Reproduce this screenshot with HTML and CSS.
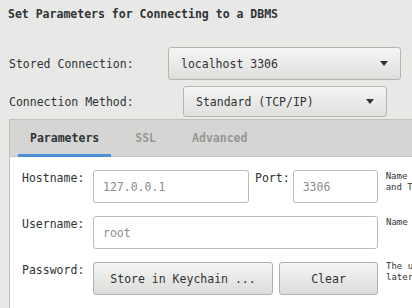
FILE: index.html
```html
<!DOCTYPE html>
<html lang="en">
<head>
    <meta charset="UTF-8">
    <title>Connect to Database</title>
    <link rel="stylesheet" href="styles.css">
</head>
<body>

    <h2 class="title">Set Parameters for Connecting to a DBMS</h2>

    <div class="conn-row">
        <label class="conn-label">Stored Connection:</label>
        <div class="dropdown dropdown-stored">
            <span>localhost 3306</span>
            <span class="arrow"></span>
        </div>
    </div>

    <div class="conn-row conn-row-method">
        <label class="conn-label">Connection Method:</label>
        <div class="dropdown dropdown-method">
            <span>Standard (TCP/IP)</span>
            <span class="arrow"></span>
        </div>
    </div>

    <div class="panel">
        <div class="tabs">
            <div class="tab active">Parameters</div>
            <div class="tab">SSL</div>
            <div class="tab">Advanced</div>
        </div>

        <div class="panel-body">
            <div class="field-row">
                <label class="field-label">Hostname:</label>
                <input type="text" class="field host-field" placeholder="127.0.0.1">
                <label class="field-label port-label">Port:</label>
                <input type="text" class="field port-field" placeholder="3306">
                <div class="help">Name or IP address of the server host -<br>and TCP/IP port.</div>
            </div>

            <div class="field-row">
                <label class="field-label">Username:</label>
                <input type="text" class="field user-field" placeholder="root">
                <div class="help">Name of the user to connect with.</div>
            </div>

            <div class="field-row">
                <label class="field-label">Password:</label>
                <button type="button" class="btn btn-store">Store in Keychain ...</button>
                <button type="button" class="btn btn-clear">Clear</button>
                <div class="help help-pass">The user's password. Will be requested<br>later if it's not set.</div>
            </div>
        </div>
    </div>

</body>
</html>
```

FILE: styles.css
```css
/* Workbench-style connection dialog */
html, body {
    overflow: hidden;
}

body {
    margin: 0;
    width: 412px;
    height: 308px;
    background: #e8e8e7;
    font-family: 'DejaVu Sans Mono', monospace;
    font-size: 11.5px;
    line-height: 14px;
    color: #2e3436;
}

.title {
    margin: 0;
    padding: 7px 8px 0;
    font-size: 11.5px;
    font-weight: bold;
    line-height: 14px;
}

.conn-row {
    display: flex;
    align-items: center;
    margin-top: 26px;
    padding-left: 9px;
}

.conn-row-method {
    margin-top: 6px;
}

.conn-label {
    flex-shrink: 0;
    width: 159px;
}

.conn-row-method .conn-label {
    width: 174px;
}

.dropdown {
    display: flex;
    align-items: center;
    justify-content: space-between;
    box-sizing: border-box;
    padding: 0 12px;
    background: linear-gradient(#f5f5f4, #dfdfdd);
    border: 1px solid #b4b4b1;
    border-radius: 3px;
    color: #2e3436;
}

.dropdown-stored {
    width: 233px;
    height: 33px;
}

.dropdown-method {
    width: 204px;
    height: 31px;
}

.arrow {
    width: 0;
    height: 0;
    border-left: 4px solid transparent;
    border-right: 4px solid transparent;
    border-top: 5px solid #2e3436;
}

.panel {
    box-sizing: border-box;
    margin: 2px 0 0 9px;
    width: 600px;
    height: 189px;
    overflow: hidden;
    border: 1px solid #c0c0bd;
    border-right: none;
    border-bottom: none;
    background: #fff;
}

.tabs {
    display: flex;
    gap: 12px;
    height: 36px;
    padding-left: 8px;
    background: #d5d5d4;
    border-bottom: 1px solid #c6c6c4;
}

.tab {
    display: flex;
    align-items: center;
    padding: 0 12px;
    font-weight: bold;
    color: #959595;
    border-bottom: 3px solid transparent;
    margin-bottom: -1px;
    padding-top: 1px;
}

.tab.active {
    color: #2e3436;
    border-bottom-color: #4a90d9;
}

.panel-body {
    padding: 13px 0 0 12px;
}

.field-row {
    display: flex;
    align-items: flex-start;
    margin-bottom: 13px;
}

.field-label {
    flex-shrink: 0;
    width: 71px;
    padding-top: 1px;
}

.port-label {
    width: auto;
    margin: 0 3px 0 6px;
}

.field {
    box-sizing: border-box;
    height: 33px;
    padding: 0 9px;
    border: 1px solid #bcbcb9;
    border-radius: 3px;
    background: #fff;
    font-family: 'DejaVu Sans Mono', monospace;
    font-size: 11.5px;
    color: #2e3436;
    outline: none;
}

.field::placeholder {
    color: #8b8e8f;
}

.host-field {
    width: 156px;
}

.port-field {
    width: 85px;
}

.user-field {
    width: 285px;
}

.btn {
    box-sizing: border-box;
    height: 33px;
    padding: 0;
    background: linear-gradient(#f5f5f4, #dcdcda);
    border: 1px solid #b0b0ad;
    border-radius: 3px;
    font-family: 'DejaVu Sans Mono', monospace;
    font-size: 11.5px;
    color: #2e3436;
}

.btn-store {
    width: 180px;
}

.btn-clear {
    width: 99px;
    margin-left: 6px;
}

.help {
    flex-shrink: 0;
    margin-left: 8px;
    padding-top: 1px;
    font-size: 9px;
    line-height: 11px;
    white-space: nowrap;
    color: #2e3436;
}

.help-pass {
    margin-top: -2px;
}
```
